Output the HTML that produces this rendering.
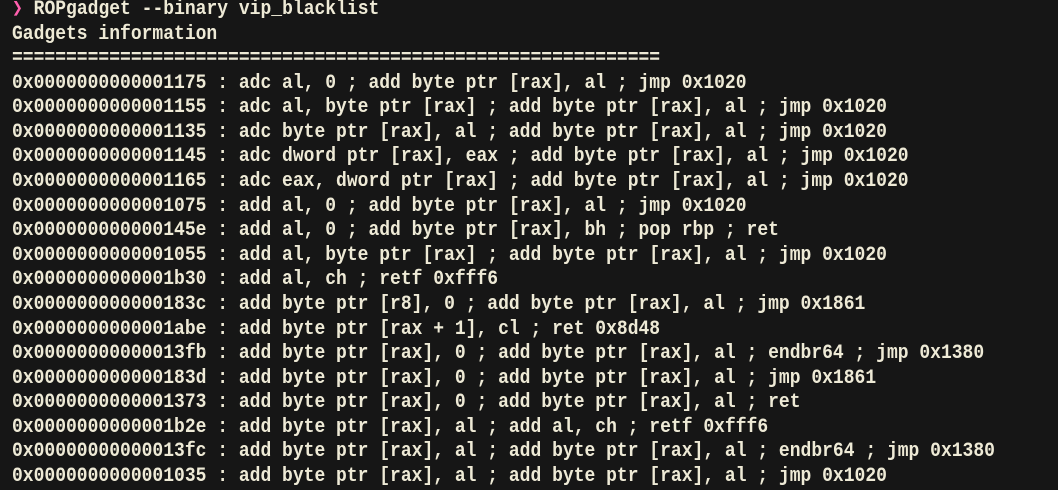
<!DOCTYPE html>
<html><head><style>
html,body{margin:0;padding:0;background:#161616;width:1058px;height:490px;overflow:hidden}
pre{margin:0;position:absolute;left:12px;top:-2px;font-family:"Liberation Mono","DejaVu Sans Mono",monospace;font-size:20px;line-height:24.58px;color:#eeead6;font-weight:bold;transform:scaleX(0.9);transform-origin:0 0}
.p{color:#ff5fae}
</style></head><body><pre><span class="p">❯</span> ROPgadget --binary vip_blacklist
Gadgets information
============================================================
0x0000000000001175 : adc al, 0 ; add byte ptr [rax], al ; jmp 0x1020
0x0000000000001155 : adc al, byte ptr [rax] ; add byte ptr [rax], al ; jmp 0x1020
0x0000000000001135 : adc byte ptr [rax], al ; add byte ptr [rax], al ; jmp 0x1020
0x0000000000001145 : adc dword ptr [rax], eax ; add byte ptr [rax], al ; jmp 0x1020
0x0000000000001165 : adc eax, dword ptr [rax] ; add byte ptr [rax], al ; jmp 0x1020
0x0000000000001075 : add al, 0 ; add byte ptr [rax], al ; jmp 0x1020
0x000000000000145e : add al, 0 ; add byte ptr [rax], bh ; pop rbp ; ret
0x0000000000001055 : add al, byte ptr [rax] ; add byte ptr [rax], al ; jmp 0x1020
0x0000000000001b30 : add al, ch ; retf 0xfff6
0x000000000000183c : add byte ptr [r8], 0 ; add byte ptr [rax], al ; jmp 0x1861
0x0000000000001abe : add byte ptr [rax + 1], cl ; ret 0x8d48
0x00000000000013fb : add byte ptr [rax], 0 ; add byte ptr [rax], al ; endbr64 ; jmp 0x1380
0x000000000000183d : add byte ptr [rax], 0 ; add byte ptr [rax], al ; jmp 0x1861
0x0000000000001373 : add byte ptr [rax], 0 ; add byte ptr [rax], al ; ret
0x0000000000001b2e : add byte ptr [rax], al ; add al, ch ; retf 0xfff6
0x00000000000013fc : add byte ptr [rax], al ; add byte ptr [rax], al ; endbr64 ; jmp 0x1380
0x0000000000001035 : add byte ptr [rax], al ; add byte ptr [rax], al ; jmp 0x1020
</pre></body></html>
